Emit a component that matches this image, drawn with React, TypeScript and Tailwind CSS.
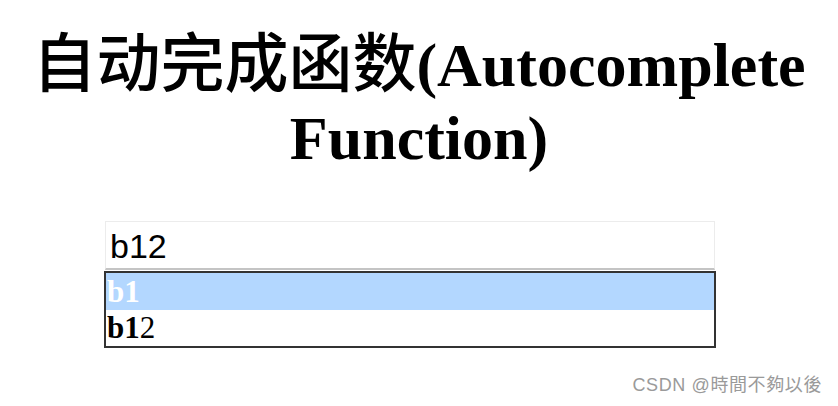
export default function App() {
  const serif = { fontFamily: '"Liberation Serif", "Noto Sans CJK SC", serif' };
  return (
    <div className="relative w-[838px] h-[406px] bg-white overflow-hidden">
      <h1
        className="mt-[22px] text-center text-[62px] leading-[73px] font-bold text-black"
        style={serif}
      >
        <span className="text-[64px] font-medium" style={{ fontFamily: '"Noto Sans CJK SC", serif' }}>
          自动完成函数
        </span>
        (Autocomplete Function)
      </h1>

      <div className="ml-[104px] mt-[46px] w-[612px]">
        <div className="ml-px w-[610px] h-[49px] border border-[#ececec] border-b-2 border-b-[#c4c4c4] pl-[4px] flex items-center">
          <span
            className="text-[34px] leading-none text-black pt-[2px]"
            style={{ fontFamily: '"Liberation Sans", Arial, sans-serif' }}
          >
            b12
          </span>
        </div>
        <div className="mt-px border-2 border-[#333333]" style={serif}>
          <div className="h-[37px] bg-[#b3d7ff] text-white text-[31px] leading-[37px] pl-[1px]">
            <b>b1</b>
          </div>
          <div className="h-[36px] text-black text-[31px] leading-[36px] pl-[1px]">
            <b>b1</b>2
          </div>
        </div>
      </div>

      <div
        className="absolute right-[16px] top-[373px] text-[18px] leading-[24px] tracking-[0.6px] text-[#9a9a9a]"
        style={{ fontFamily: '"Liberation Sans", Arial, "Noto Sans CJK TC", sans-serif' }}
      >
        CSDN @時間不夠以後
      </div>
    </div>
  );
}
